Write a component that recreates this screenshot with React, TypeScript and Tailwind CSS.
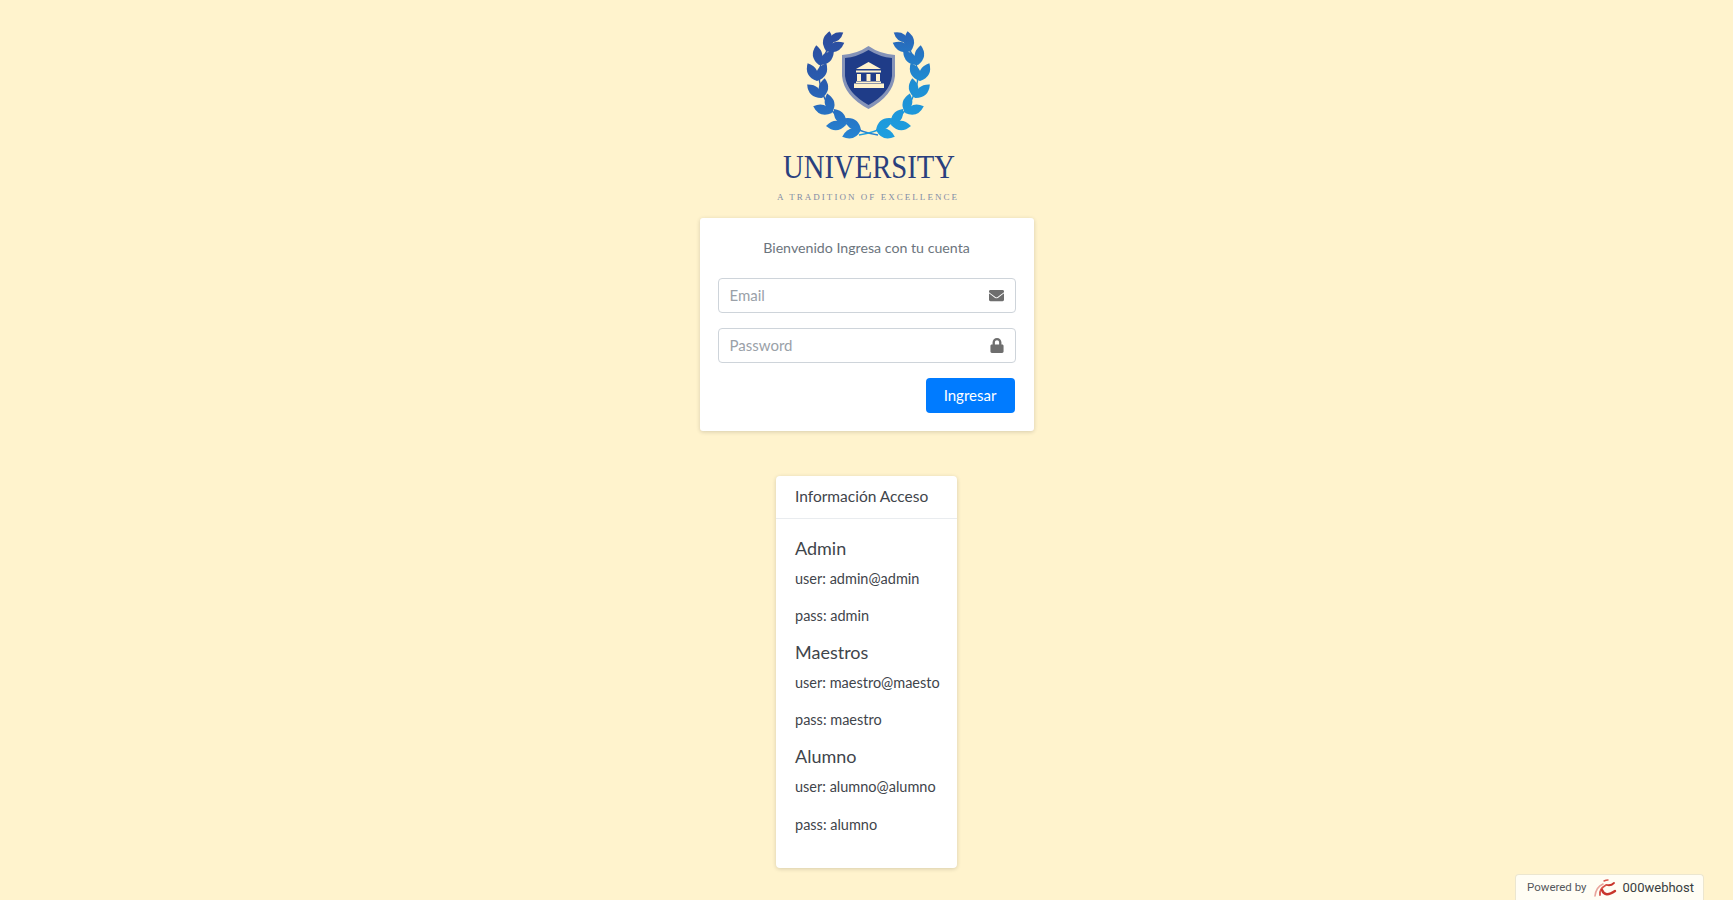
import React from 'react';
import { FaEnvelope, FaLock } from 'react-icons/fa';

// branch nodes of the left half of the wreath: x, y, branch angle in degrees
const nodes = [
  [99, 120, 188],
  [84, 115, 205],
  [70, 103, 228],
  [60, 88, 250],
  [55, 71, 270],
  [57, 55, 290],
  [64, 41, 308],
];

function leaf(x: number, y: number, angle: number, len: number, w: number) {
  const a = (angle * Math.PI) / 180;
  const tx = x + Math.cos(a) * len;
  const ty = y + Math.sin(a) * len;
  const mx = x + Math.cos(a) * len * 0.5;
  const my = y + Math.sin(a) * len * 0.5;
  const nx = -Math.sin(a) * w;
  const ny = Math.cos(a) * w;
  return `M${x} ${y}Q${mx + nx} ${my + ny} ${tx} ${ty}Q${mx - nx} ${my - ny} ${x} ${y}Z`;
}

function Branch({ fill }: { fill: string }) {
  return (
    <g fill={fill}>
      <path d="M116 125Q84 120 68 98Q50 70 62 46Q66 38 72 30" fill="none" stroke={fill} strokeWidth="1.400" />
      {nodes.map(([x, y, angle], i) => (
        <g key={i}>
          <path d={leaf(x, y, angle - 28, 20, 9.500)} />
          <path d={leaf(x, y, angle + 28, 20, 9.500)} />
        </g>
      ))}
      <path d={leaf(66, 32, 328, 18, 8)} />
    </g>
  );
}

function UniversityLogo() {
  return (
    <svg viewBox="0 0 210 205" className="w-[210px] h-[205px] mt-[10px] shrink-0">
      <defs>
        <linearGradient id="leftLeaf" gradientUnits="userSpaceOnUse" x1="0" y1="130" x2="0" y2="20">
          <stop offset="0" stopColor="#2585d4" />
          <stop offset="0.5" stopColor="#2a5db0" />
          <stop offset="1" stopColor="#2b4a9c" />
        </linearGradient>
        <linearGradient id="rightLeaf" gradientUnits="userSpaceOnUse" x1="0" y1="130" x2="0" y2="20">
          <stop offset="0" stopColor="#1d9fe0" />
          <stop offset="0.5" stopColor="#1f8fd4" />
          <stop offset="1" stopColor="#2a62b6" />
        </linearGradient>
      </defs>
      <Branch fill="url(#leftLeaf)" />
      <g transform="matrix(-1 0 0 1 213 0)">
        <Branch fill="url(#rightLeaf)" />
      </g>
      <path d="M106.500 36Q118 44 133 45L133 66Q131 86 106.500 99Q82 86 80 66L80 45Q95 44 106.500 36Z" fill="#8593b8" />
      <path d="M106.500 40Q118 47 130 48L130 66Q128 83 106.500 95Q85 83 83 66L83 48Q95 47 106.500 40Z" fill="#1f3c88" />
      <path d="M94 59L106.500 52L119 59Z" fill="#fff3cd" />
      <path d="M94 60.500H119V62.500H94ZM95 64H99V71H95ZM104.500 64H108.500V71H104.500ZM114 64H118V71H114ZM94 71.500H119V73H94ZM92 73.500H122V78H92Z" fill="#fff3cd" />
      <text
        transform="translate(21 168) scale(0.843 1)"
        fontFamily="'Liberation Serif', serif"
        fontSize="34"
        fill="#2a3f7e"
      >
        UNIVERSITY
      </text>
      <text
        x="15"
        y="190"
        textLength="180"
        fontFamily="'Liberation Serif', serif"
        fontSize="9"
        fill="#7f8ba6"
      >
        A TRADITION OF EXCELLENCE
      </text>
    </svg>
  );
}

function Field({ placeholder, type, icon }: { placeholder: string; type: string; icon: React.ReactNode }) {
  return (
    <div className="flex items-center h-[35px] rounded-[4px] border border-[#ced4da] bg-white pl-[11px] pr-[11px]">
      <input
        type={type}
        placeholder={placeholder}
        className="flex-1 min-w-0 bg-transparent outline-none text-[15px] placeholder:text-[#9aa1a8]"
      />
      {icon}
    </div>
  );
}

function AccessGroup({ title, user, pass }: { title: string; user: string; pass: string }) {
  return (
    <div>
      <h5 className="text-[18px] leading-[21px] mb-[9px] text-[#3f454b]">{title}</h5>
      <p className="text-[14.500px] leading-[21.600px] mb-4 text-[#3f454b] whitespace-nowrap">user: {user}</p>
      <p className="text-[14.500px] leading-[21.600px] mb-[15px] text-[#3f454b] whitespace-nowrap">pass: {pass}</p>
    </div>
  );
}

function WebhostBadge() {
  return (
    <div className="fixed right-[29px] bottom-0 w-[189px] h-[26px] flex items-center gap-[6px] pl-[11px] rounded-t-[4px] border border-b-0 border-[#ece6cf] bg-[#fffdf4] font-['Roboto',sans-serif]">
      <span className="text-[11.500px] text-[#55585c]">Powered by</span>
      <svg viewBox="0 0 24 20" className="w-[24px] h-[20px] shrink-0" fill="none" strokeLinecap="round">
        <path d="M10 6Q3 9 2 18" stroke="#e8a49c" strokeWidth="1.600" />
        <path d="M13 7Q6 11 7 17" stroke="#d9534a" strokeWidth="1.800" />
        <path d="M9 12Q12 20 22 13" stroke="#c8352b" strokeWidth="2.400" />
        <path d="M11 3Q13 2 15 2" stroke="#d9534a" strokeWidth="1.400" />
        <path d="M14 7Q18 8 21 5" stroke="#c8352b" strokeWidth="1.800" />
      </svg>
      <span className="text-[13px] text-[#3a3d40]">000webhost</span>
    </div>
  );
}

export default function App() {
  return (
    <div className="min-h-screen bg-[#fff3cd] flex flex-col items-center font-['Lato','Noto_Sans',sans-serif]">
      <UniversityLogo />

      {/* Login card */}
      <div className="w-[334px] mt-[3px] bg-white rounded-[3px] shadow-[0_1px_4px_rgba(0,0,0,0.16)] px-[18px] pt-[19px] pb-[18px]">
        <p className="text-center text-[14.200px] leading-[21.600px] text-[#6c757d] mb-[19px]">Bienvenido Ingresa con tu cuenta</p>
        <div className="flex flex-col gap-[15px]">
          <Field placeholder="Email" type="email" icon={<FaEnvelope className="w-[15px] h-[15px] text-[#6e6e6e]" />} />
          <Field placeholder="Password" type="password" icon={<FaLock className="w-[14px] h-[15px] text-[#6e6e6e]" />} />
          <div className="flex justify-end pr-px">
            <button className="w-[89px] h-[35px] rounded-[4px] bg-[#007bff] text-white text-[15px]">Ingresar</button>
          </div>
        </div>
      </div>

      {/* Access info */}
      <div className="w-[181px] mt-[45px] bg-white rounded-[4px] shadow-[0_1px_4px_rgba(0,0,0,0.16)]">
        <div className="h-[43px] flex items-center px-[19px] border-b border-[#e9ecef] text-[15.500px] text-[#3f454b] whitespace-nowrap">Información Acceso</div>
        <div className="px-[19px] pt-[19px] pb-[18px]">
          <AccessGroup title="Admin" user="admin@admin" pass="admin" />
          <AccessGroup title="Maestros" user="maestro@maesto" pass="maestro" />
          <AccessGroup title="Alumno" user="alumno@alumno" pass="alumno" />
        </div>
      </div>

      <WebhostBadge />
    </div>
  );
}
